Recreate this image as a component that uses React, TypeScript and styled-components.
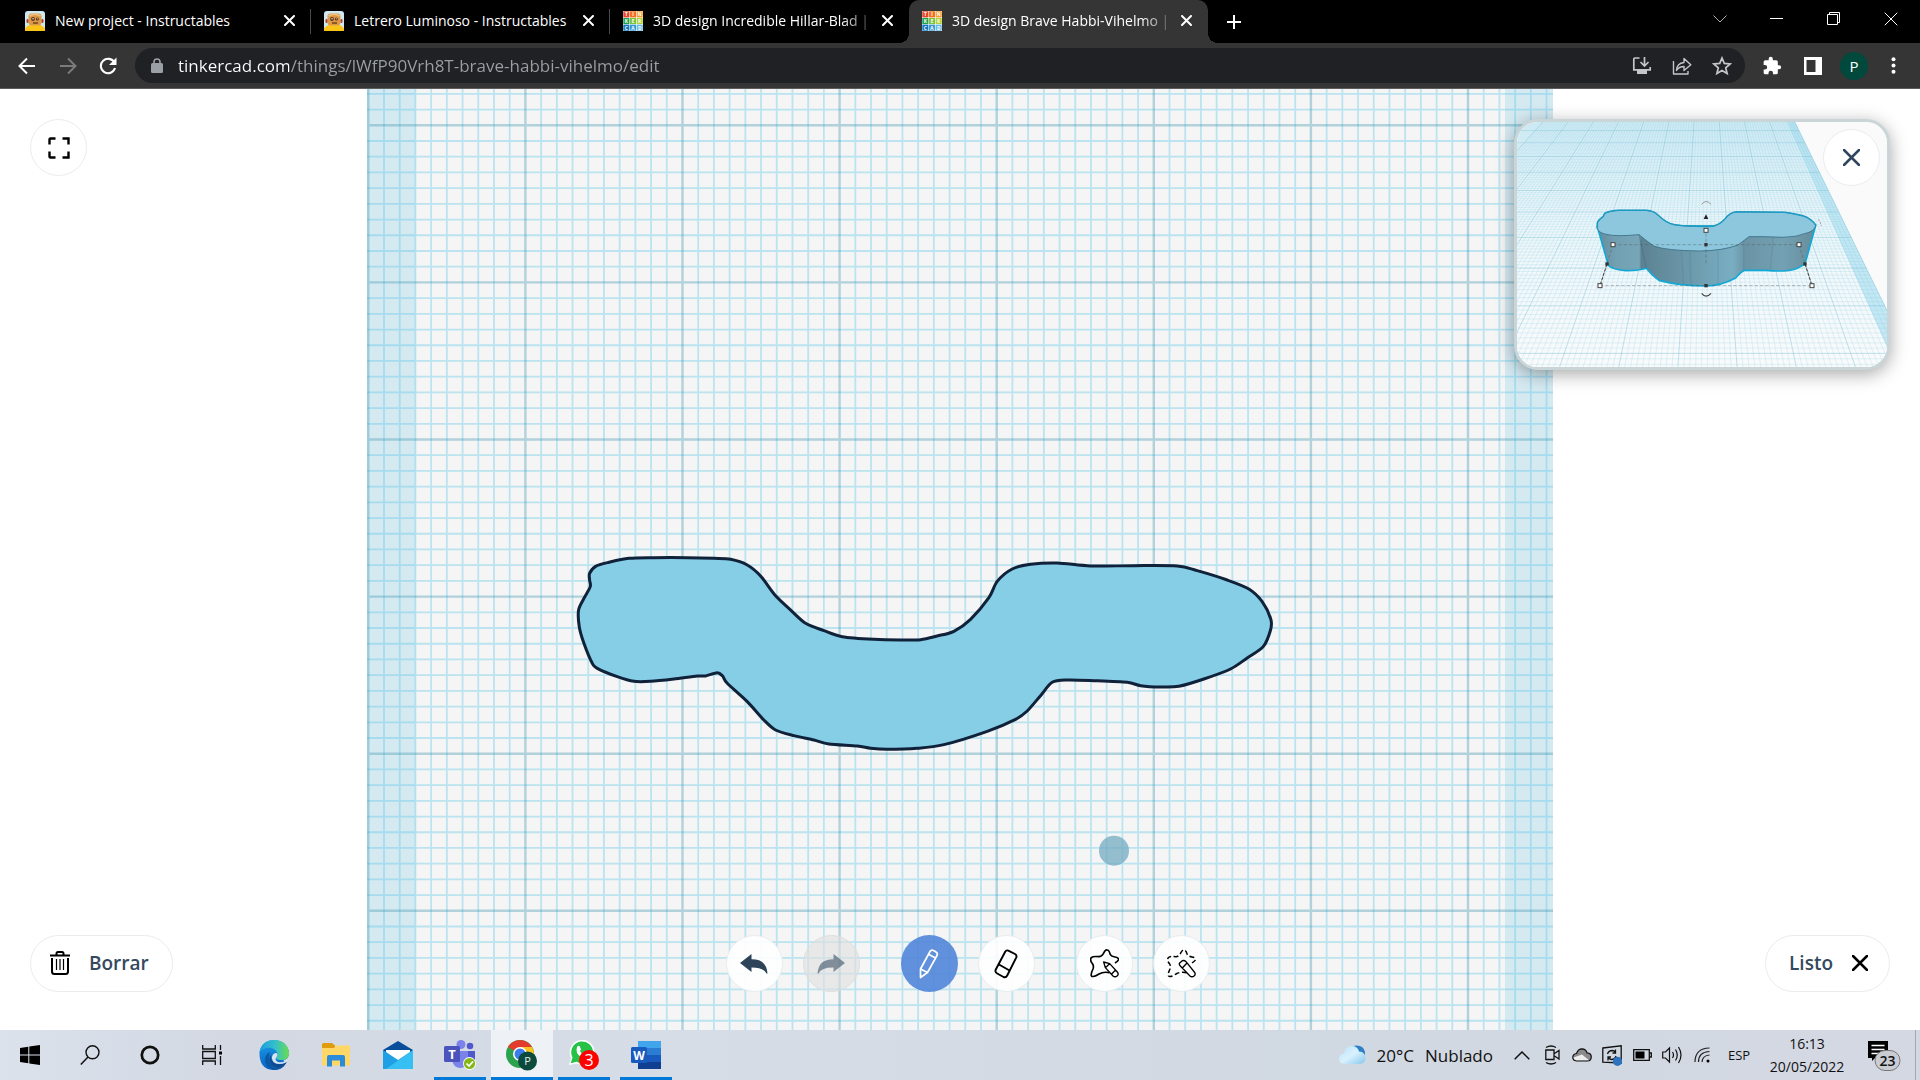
import React from "react";
import styled, { createGlobalStyle, css } from "styled-components";

const UI_FONT = `"Open Sans", "Noto Sans", sans-serif`;

const GlobalStyle = createGlobalStyle`
  *, *::before, *::after { box-sizing: border-box; }
  body { margin: 0; background: #fff; font-family: ${UI_FONT}; }
  button, input { font: inherit; color: inherit; margin: 0; }
  button { border: 0; padding: 0; background: none; cursor: pointer; }
  svg { display: block; flex: none; }
`;

const Page = styled.div`
  display: flex;
  flex-direction: column;
  min-height: 100vh;
`;

/* ---------- browser chrome ---------- */

const TabStrip = styled.header`
  display: flex;
  align-items: stretch;
  justify-content: space-between;
  height: 43px;
  background: #000;
  color: #fff;
  padding-left: 12px;
`;

const Tabs = styled.div`
  display: flex;
  align-items: stretch;
`;

const Tab = styled.div<{ $active?: boolean; $divider?: boolean }>`
  position: relative;
  display: flex;
  align-items: center;
  gap: 10px;
  width: 299px;
  padding: 0 12px 2px 13px;
  ${(p) => p.$divider && css`
    &::after { content: ""; position: absolute; right: 0; top: 9px; height: 25px; width: 1px; background: #4a4a4a; }`}
  ${(p) => p.$active && css`
    background: #353535;
    border-radius: 10px 10px 0 0;
    &::before, &::after {
      content: ""; position: absolute; bottom: 0; width: 10px; height: 10px;
    }
    &::before { left: -10px; background: radial-gradient(circle at 0 0, #000 10px, #353535 10px); }
    &::after { right: -10px; background: radial-gradient(circle at 100% 0, #000 10px, #353535 10px); }
  `}
`;

const TabTitle = styled.button<{ $fade?: boolean }>`
  flex: 1;
  min-width: 0;
  white-space: nowrap;
  text-align: left;
  font-size: 14px;
  line-height: 20px;
  ${(p) => p.$fade && css`mask-image: linear-gradient(90deg, #000 88%, rgba(0, 0, 0, 0.3));`}
`;

const IconButton = styled.button<{ $w?: number }>`
  display: flex;
  align-items: center;
  justify-content: center;
  width: ${(p) => p.$w ?? 20}px;
  flex: none;
`;

const WindowControls = styled.div`
  display: flex;
  align-items: center;
  padding: 0 1px 6px 0;
`;

const Toolbar = styled.div`
  display: flex;
  align-items: center;
  height: 46px;
  background: #353535;
  border-bottom: 1px solid #5c5c5c;
  padding: 0 15px 0 7px;
  color: #fff;
`;

const NavButtons = styled.div`
  display: flex;
  width: 128px;
`;

const Omnibox = styled.div`
  display: flex;
  align-items: center;
  flex: 1;
  height: 35px;
  border-radius: 18px;
  background: #202124;
  padding: 0 3px 0 16px;
  gap: 15px;
`;

const UrlInput = styled.input`
  flex: 1;
  min-width: 0;
  border: 0;
  outline: 0;
  padding: 0;
  font-size: 17px;
  line-height: 26px;
  color: transparent;
  background: linear-gradient(90deg, #fff 111px, #9aa0a6 111px);
  -webkit-background-clip: text;
  background-clip: text;
`;

const OmniActions = styled.div`
  display: flex;
`;

const Avatar = styled.button`
  width: 28px;
  height: 28px;
  border-radius: 50%;
  background: #00493c;
  font-size: 15px;
  line-height: 28px;
`;

/* ---------- editor ---------- */

const Stage = styled.main`
  position: relative;
  flex: 1;
  display: flex;
  justify-content: center;
  overflow: hidden;
  background: #fff;
  color: #34495e;
`;

const Corner = styled.div<{ $v: "top" | "bottom"; $h: "left" | "right" }>`
  position: absolute;
  ${(p) => p.$v}: ${(p) => (p.$v === "top" ? 30 : 38)}px;
  ${(p) => p.$h}: 30px;
`;

const round = css`
  display: flex;
  align-items: center;
  justify-content: center;
  border: 1px solid #e9ecee;
  background: rgba(255, 255, 255, 0.9);
`;

const RoundButton = styled.button<{ $active?: boolean; $muted?: boolean }>`
  ${round}
  width: 57px;
  height: 57px;
  border-radius: 50%;
  ${(p) => p.$active && css`background: rgba(84, 136, 217, 0.92); border-color: transparent;`}
  ${(p) => p.$muted && css`background: rgba(225, 225, 225, 0.65); border-color: #dedede;`}
`;

const PillButton = styled.button<{ $iconLast?: boolean }>`
  ${round}
  height: 57px;
  border-radius: 29px;
  padding: ${(p) => (p.$iconLast ? "0 21px 2px 23px" : "0 23px 2px 19px")};
  gap: 19px;
  font-size: 19px;
  line-height: 28px;
  font-weight: 600;
`;

const Tools = styled.div`
  position: absolute;
  left: 0;
  right: 0;
  bottom: 38px;
  display: flex;
  justify-content: center;
  gap: 41px;
  padding-left: 15px;
  pointer-events: none;
`;

const ToolGroup = styled.div`
  display: flex;
  gap: 20px;
  pointer-events: auto;
`;

const Preview = styled.section`
  position: relative;
  border: 3px solid #cad5d8;
  border-radius: 24px;
  background: #fafafa;
  box-shadow: 0 4px 18px rgba(0, 0, 0, 0.35);
  overflow: hidden;
`;

const PreviewClose = styled.div`
  position: absolute;
  top: 7px;
  right: 7px;
`;

/* ---------- taskbar ---------- */

const Taskbar = styled.footer`
  display: flex;
  justify-content: space-between;
  height: 50px;
  background: linear-gradient(90deg, #dbe2ec 0%, #d3d8e3 12%, #d6dde7 35%, #d0d8e1 70%, #d4d8e3 100%);
  color: #111;
`;

const TaskGroup = styled.div`
  display: flex;
  align-items: stretch;
`;

const TaskButton = styled.button<{ $running?: boolean; $current?: boolean; $w?: number }>`
  position: relative;
  display: flex;
  align-items: center;
  justify-content: center;
  width: ${(p) => p.$w ?? 62}px;
  ${(p) => p.$current && css`background: #eef1f6;`}
  ${(p) => p.$running && css`&::after {
    content: ""; position: absolute; bottom: 0; height: 3px; background: #0078d7;
    left: ${p.$current ? 0 : 5}px; right: ${p.$current ? 0 : 5}px;
  }`}
`;

const TrayButton = styled.button`
  display: flex;
  align-items: center;
  justify-content: center;
  width: 30px;
`;

const Weather = styled.button`
  display: flex;
  align-items: center;
  gap: 11px;
  font-size: 17px;
  margin-right: 14px;
`;

const Language = styled.button`
  width: 44px;
  font-size: 13px;
`;

const Clock = styled.button`
  width: 92px;
  font-size: 14px;
  line-height: 23px;
  text-align: center;
`;

const Notifications = styled.button`
  display: flex;
  align-items: center;
  justify-content: center;
  width: 63px;
  border-right: 1px solid #a2a7b1;
  margin-right: 4px;
`;

/* ---------- drawings ---------- */

type Pt = [number, number];

/** Closed Catmull-Rom curve through the given points. */
const smooth = (pts: Pt[]) => {
  const n = pts.length;
  let d = `M${pts[0][0]} ${pts[0][1]}`;
  for (let i = 0; i < n; i++) {
    const [a, b, c, e] = [pts[(i - 1 + n) % n], pts[i], pts[(i + 1) % n], pts[(i + 2) % n]];
    d += `C${b[0] + (c[0] - a[0]) / 7} ${b[1] + (c[1] - a[1]) / 7} ${c[0] - (e[0] - b[0]) / 7} ${c[1] - (e[1] - b[1]) / 7} ${c[0]} ${c[1]}`;
  }
  return d + "Z";
};

const SCRIBBLE: Pt[] = [
  [147, 130], [165, 109], [205, 97], [265, 85], [340, 83], [440, 83], [520, 85], [570, 88], [620, 105], [660, 138],
  [703, 195], [748, 238], [795, 280], [850, 302], [905, 320], [1000, 328], [1080, 330], [1140, 329], [1190, 318],
  [1240, 304], [1290, 268], [1345, 203], [1370, 154], [1415, 117], [1470, 103], [1550, 99], [1650, 108], [1780, 107],
  [1910, 108], [1970, 122], [2060, 150], [2125, 177], [2165, 215], [2191, 268], [2190, 300], [2168, 350], [2120, 384],
  [2070, 417], [1990, 447], [1915, 469], [1860, 471], [1800, 467], [1760, 457], [1660, 452], [1580, 450], [1535, 457],
  [1500, 497], [1460, 543], [1425, 568], [1340, 604], [1210, 644], [1130, 655], [1040, 658], [990, 655], [950, 648],
  [865, 642], [820, 630], [760, 617], [705, 600], [670, 570], [620, 515], [560, 460], [546, 438], [530, 428], [495, 438],
  [470, 438], [400, 447], [330, 454], [280, 454], [230, 440], [170, 415], [155, 400], [130, 340], [116, 290], [114, 240],
  [130, 205], [149, 170], [147, 150],
];

/** Ruled lines of the plane, drawn across and down at a fixed step. */
const ruling = (step: number, skip?: number) => {
  let d = "";
  for (let i = 0; i * step < 1186; i++) if (!skip || i % skip) d += `M${0.3 + i * step} 0V941`;
  for (let i = -10; 36.3 + i * step < 941; i++) {
    if (36.3 + i * step > 0 && (!skip || i % skip)) d += `M-1 ${36.3 + i * step}H1185`;
  }
  return d;
};

const Workplane = () => (
  <svg width="1186" height="941" viewBox="-1 0 1186 941" role="img" aria-label="Plano de trabajo">
    <rect x="-1" width="1186" height="941" fill="#f5f5f5" />
    <rect x="-1" width="48.500" height="941" fill="#d5e9f1" />
    <rect x="1137" width="48" height="941" fill="#d5e9f1" />
    <path d={ruling(15.71, 10)} stroke="#55c4e8" strokeOpacity=".36" strokeWidth="1.800" fill="none" />
    <path d={ruling(157.1)} stroke="#3a95b0" strokeOpacity=".36" strokeWidth="2.400" fill="none" />
    <g transform="translate(172.6 441) scale(.3333)">
      <path d={smooth(SCRIBBLE)} fill="#86cde6" stroke="#10213a" strokeWidth="9" strokeLinejoin="round" />
    </g>
    <circle cx="746" cy="761.700" r="15" fill="#6fa9bf" fillOpacity=".72" />
  </svg>
);

const lineX = (k: number, y: number) => 583 + 76 * k + ((-48 + 101 * k) * (y - 369)) / 728;

const planeLines = () => {
  let minor = "";
  let major = "";
  for (let i = -60; i <= 40; i++) {
    const seg = `M${lineX(i / 10, 360)} 360L${lineX(i / 10, 1105)} 1105`;
    if (i % 10 === 0) major += seg;
    else minor += seg;
  }
  for (let i = -13; i <= 92; i++) {
    const y = 1 / (0.000912 + i * 0.0000105) - 179;
    if (y < 360 || y > 1110) continue;
    const seg = `M40 ${y}H${Math.min(1170, lineX(4, y))}`;
    if (i % 10 === 0) major += seg;
    else minor += seg;
  }
  return { minor, major };
};

const PLANE = planeLines();

const Handle = ({ x, y }: { x: number; y: number }) => (
  <rect x={x - 6} y={y - 6} width="12" height="12" fill="#fff" stroke="#444" strokeWidth="3" />
);
const Dot = ({ x, y }: { x: number; y: number }) => <rect x={x - 5} y={y - 5} width="10" height="10" fill="#333" />;

const TOP_FACE =
  "M315 640Q330 632 360 631H440Q462 632 475 645Q500 670 525 674Q560 680 640 679Q660 674 675 658Q690 636 712 635L855 637Q905 644 922 652Q945 666 948 676Q945 692 925 698Q890 712 850 712Q790 709 748 710Q735 720 715 735Q670 752 600 753Q500 752 462 738Q440 722 418 704Q350 710 325 704Q298 700 293 686V668Q296 660 310 650Z";

const Preview3D = () => (
  <svg width="370" height="245" viewBox="52 366 1110 735" role="img" aria-label="Vista previa 3D">
    <defs>
      <linearGradient id="haze" x1="0" y1="0" x2="0" y2="1">
        <stop offset="0" stopColor="#dff1f8" />
        <stop offset=".45" stopColor="#eef7fa" />
        <stop offset="1" stopColor="#f9fafb" />
      </linearGradient>
      <linearGradient id="side" x1="295" x2="945" y1="0" y2="0" gradientUnits="userSpaceOnUse">
        <stop offset="0" stopColor="#658b9b" /><stop offset=".08" stopColor="#72a0b2" />
        <stop offset=".19" stopColor="#76a6b8" /><stop offset=".2" stopColor="#5c8292" />
        <stop offset=".4" stopColor="#6a97a9" /><stop offset=".62" stopColor="#79aec2" />
        <stop offset=".68" stopColor="#6a94a5" /><stop offset=".85" stopColor="#73a1b3" />
        <stop offset="1" stopColor="#668d9c" />
      </linearGradient>
    </defs>
    <rect x="52" y="366" width="1110" height="735" fill="#fafafa" />
    <path d={`M40 360H${lineX(4, 360)}L${lineX(4, 1105)} 1105H40Z`} fill="url(#haze)" />
    <path d={`M${lineX(3.68, 360)} 360H${lineX(4, 360)}L${lineX(4, 1105)} 1105H${lineX(3.68, 1105)}Z`} fill="#c3e7f3" />
    <path d={PLANE.minor} stroke="#7fcbe4" strokeOpacity=".32" strokeWidth="2" fill="none" />
    <path d={PLANE.major} stroke="#5aaecb" strokeOpacity=".42" strokeWidth="2.500" fill="none" />
    <path
      d="M293 680L325 792Q330 808 380 812Q420 812 440 805Q460 830 480 842Q540 858 620 858Q665 857 708 834Q725 815 735 811H800Q860 817 890 806Q915 795 918 785L948 676Z"
      fill="url(#side)" stroke="#12a9d6" strokeWidth="5" />
    <path d={TOP_FACE} fill="#8dc7dd" stroke="#3a6c82" strokeWidth="2.500" />
    <path
      d="M948 676Q945 666 922 652Q905 644 855 637L712 635Q690 636 675 658Q660 674 640 679Q560 680 525 674Q500 670 475 645Q462 632 440 631H360Q330 632 315 640L310 650Q296 660 293 668V686"
      fill="none" stroke="#1c9cc4" strokeWidth="4.500" />
    <path d="M418 704L440 805" stroke="#3a5f70" strokeWidth="2" strokeOpacity=".6" />
    <path d="M732 722V811M570 755L574 855M545 755L552 853M655 752V852M820 712L812 811" stroke="#3a5f70" strokeWidth="4" strokeOpacity=".14" />
    <path d="M340 734H898M301 857H937M619 700V790M340 734L301 857M898 734L937 857" stroke="#555" strokeOpacity=".55" strokeWidth="2.200" strokeDasharray="10 6" fill="none" />
    <path d="M322 792L301 857M916 792L937 857" stroke="#333" strokeWidth="3" strokeDasharray="9 5" />
    <Handle x={619} y={691} /><Handle x={340} y={734} /><Handle x={898} y={734} />
    <Handle x={301} y={857} /><Handle x={937} y={857} />
    <Dot x={619} y={734} /><Dot x={322} y={792} /><Dot x={916} y={792} /><Dot x={619} y={857} />
    <path d="M619 643L626 657H612Z" fill="#222" />
    <path d="M606 613Q619 596 634 613" fill="none" stroke="#999" strokeWidth="3" />
    <path d="M606 880Q619 897 634 880" fill="none" stroke="#444" strokeWidth="3.500" />
    <path d="M955 658Q963 664 964 678" fill="none" stroke="#999" strokeWidth="3" strokeDasharray="6 4" />
  </svg>
);

const Cross = ({ size, color = "currentColor", weight = 2 }: { size: number; color?: string; weight?: number }) => (
  <svg width={size} height={size} viewBox={`0 0 ${size} ${size}`}>
    <path d={`M1 1L${size - 1} ${size - 1}M${size - 1} 1L1 ${size - 1}`} stroke={color} strokeWidth={weight} strokeLinecap="round" />
  </svg>
);

const RobotIcon = () => (
  <svg width="20" height="20" viewBox="0 0 20 20">
    <rect width="20" height="20" rx="3" fill="#cfe9f3" />
    <path d="M0 20V18Q2 14 6 14H14Q18 14 20 18V20Z" fill="#fcc419" />
    <rect x="3.500" y="2.500" width="13" height="12" rx="3" fill="#dc9a45" />
    <path d="M4.500 5Q10 1.500 15.500 5" stroke="#f0c080" strokeWidth="1.500" fill="none" />
    <rect x="1.500" y="8" width="2" height="4" rx="1" fill="#b33d2e" /><rect x="16.500" y="8" width="2" height="4" rx="1" fill="#b33d2e" />
    <circle cx="8" cy="8" r="1.900" fill="#5b2e1c" /><circle cx="12.400" cy="8" r="1.500" fill="#5b2e1c" />
    <circle cx="8" cy="7.700" r=".7" fill="#fff" /><circle cx="12.400" cy="7.800" r=".5" fill="#fff" />
    <path d="M8 12H13" stroke="#5b2e1c" strokeWidth="1.200" />
  </svg>
);

const TINKER: [string, string][] = [
  ["T", "#e8452c"], ["I", "#f2711f"], ["N", "#f79a2b"],
  ["K", "#1fa04f"], ["E", "#7cc142"], ["R", "#b0d136"],
  ["C", "#1477bd"], ["A", "#3a9ad5"], ["D", "#66b8e6"],
];

const TinkercadIcon = () => (
  <svg width="20" height="20" viewBox="0 0 21 21">
    <rect width="21" height="21" fill="#fff" />
    {TINKER.map(([letter, color], i) => (
      <g key={letter} transform={`translate(${(i % 3) * 7} ${Math.floor(i / 3) * 7})`}>
        <rect x=".3" y=".3" width="6.400" height="6.400" fill={color} />
        <text x="3.500" y="5.500" textAnchor="middle" fontSize="5" fontWeight="700" fill="#fff">{letter}</text>
      </g>
    ))}
  </svg>
);

const stroke = { fill: "none", stroke: "currentColor" } as const;

const BackIcon = () => (
  <svg width="18" height="18" viewBox="0 0 18 18"><path d="M17 9H2M9 1.500L1.500 9L9 16.500" {...stroke} strokeWidth="2" /></svg>
);
const ForwardIcon = () => (
  <svg width="18" height="18" viewBox="0 0 18 18"><path d="M1 9H16M9 1.500L16.500 9L9 16.500" fill="none" stroke="#7b7b7b" strokeWidth="2" /></svg>
);
const ReloadIcon = () => (
  <svg width="18" height="18" viewBox="0 0 18 18">
    <path d="M15.400 5.500A7.200 7.200 0 1 0 16 11" {...stroke} strokeWidth="2.100" /><path d="M17.500 .5V8H10Z" fill="currentColor" />
  </svg>
);
const LockIcon = () => (
  <svg width="12" height="15" viewBox="0 0 12 15">
    <rect y="5" width="12" height="10" rx="1.500" fill="#9aa0a6" /><path d="M3 6V4A3 3 0 0 1 9 4V6" stroke="#9aa0a6" strokeWidth="1.600" fill="none" />
  </svg>
);
const InstallIcon = () => (
  <svg width="20" height="20" viewBox="0 0 20 20">
    <path d="M7.500 2H3Q1.800 2 1.800 3.200V13.800H18.200V11M12.500 1V9.500M8.500 6L12.500 10L16.500 6" fill="none" stroke="#c4c7ca" strokeWidth="1.700" />
    <path d="M5 14H15V18H5Z" fill="#c4c7ca" />
  </svg>
);
const ShareIcon = () => (
  <svg width="20" height="20" viewBox="0 0 20 20">
    <path d="M1.500 5V18H16V15M4.500 14.500Q5 7 12 6.500V2.500L18.800 8.700L12 14.500V10.500Q7 10.500 4.500 14.500Z" fill="none" stroke="#c4c7ca" strokeWidth="1.400" strokeLinejoin="round" />
  </svg>
);
const StarIcon = () => (
  <svg width="20" height="20" viewBox="0 0 20 20">
    <path d="M10 2L12.300 7.400L18.200 7.900L13.700 11.800L15.100 17.500L10 14.400L4.900 17.500L6.300 11.800L1.800 7.900L7.700 7.400Z" fill="none" stroke="#c4c7ca" strokeWidth="1.700" />
  </svg>
);
const PuzzleIcon = () => (
  <svg width="20" height="20" viewBox="0 0 24 24">
    <path fill="#fff" d="M20.500 11H19V7a2 2 0 0 0-2-2h-4V3.500a2.500 2.500 0 0 0-5 0V5H4a2 2 0 0 0-2 2v3.800h1.500a2.700 2.700 0 0 1 0 5.400H2V20a2 2 0 0 0 2 2h3.800v-1.500a2.700 2.700 0 0 1 5.400 0V22H17a2 2 0 0 0 2-2v-4h1.500a2.500 2.500 0 0 0 0-5Z" />
  </svg>
);
const PanelIcon = () => (
  <svg width="18" height="18" viewBox="0 0 18 18"><path fill="#fff" fillRule="evenodd" d="M0 0H18V18H0ZM2.500 3V15H11.500V3Z" /></svg>
);
const DotsIcon = () => (
  <svg width="5" height="17" viewBox="0 0 5 17"><g fill="#fff"><circle cx="2.500" cy="2.200" r="2" /><circle cx="2.500" cy="8.500" r="2" /><circle cx="2.500" cy="14.800" r="2" /></g></svg>
);

const UndoIcon = ({ flip }: { flip?: boolean }) => (
  <svg width="28" height="20" viewBox="0 0 28 20">
    <path transform={flip ? "translate(28 0) scale(-1 1)" : undefined} opacity={flip ? 0.55 : 1} fill="#2c435a"
      d="M0 9L11.500 0V5.200Q26.500 5 27.500 19.500H26.500Q23.500 13.500 11.500 13.600V18Z" />
  </svg>
);
const PencilIcon = () => (
  <svg width="20" height="30" viewBox="0 0 20 30">
    <path d="M1.500 20L11 2.500Q12.200 .5 14.500 1.500L17 3Q19 4.200 18 6.500L8.500 23.500L1.500 28.500ZM1.500 20L8.500 23.500M9.500 5.200L16.500 9" fill="none" stroke="#fff" strokeWidth="1.700" strokeLinejoin="round" />
  </svg>
);
const EraserIcon = () => (
  <svg width="24" height="30" viewBox="0 0 24 30">
    <path d="M1.800 20.500L11.200 2.800Q12.300 .8 14.300 1.600L21 5Q23.200 6.200 22.200 8.600L13.200 26.500Q12 29 9.500 28L3.200 24.500Q.6 23 1.800 20.500ZM5 15.500L15.500 21.500" fill="none" stroke="#000" strokeWidth="1.900" />
  </svg>
);
const STAR_OUTLINE =
  "M116 157Q97 153 84 161Q66 173 61 166Q59 160 66 146Q69 138 65 131Q55 119 61 112Q66 107 84 109Q92 109 97 100Q103 87 109 89Q114 89 118 103Q121 108 132 110Q144 112 142 119Q140 123 132 128";
const ShapeDrawIcon = () => (
  <svg width="29" height="29" viewBox="57 86 87 87">
    <path d={STAR_OUTLINE} fill="none" stroke="#000" strokeWidth="5" strokeLinejoin="round" />
    <path d="M98 125L116 130L139 155Q144 161 139 166Q132 172 126 167L103 142ZM116 130L103 142M133 150L121 162" fill="#fff" stroke="#000" strokeWidth="4" strokeLinejoin="round" />
  </svg>
);
const ShapeEraseIcon = () => (
  <svg width="29" height="29" viewBox="57 86 87 87">
    <path d={STAR_OUTLINE} fill="none" stroke="#000" strokeWidth="4.500" strokeDasharray="14 8" />
    <path d="M95 128L103 121Q109 119 114 124L139 155Q144 161 139 166Q132 172 126 167L97 137Q92 132 95 128ZM117 128L103 143" fill="#fff" stroke="#000" strokeWidth="4" strokeLinejoin="round" />
  </svg>
);
const ExpandIcon = () => (
  <svg width="22" height="22" viewBox="0 0 22 22">
    <path d="M1.500 7.500V2.500Q1.500 1.500 2.500 1.500H7.500M14.500 1.500H20.500V7.500M20.500 14.500V20.500H14.500M7.500 20.500H2.500Q1.500 20.500 1.500 19.500V14.500" fill="none" stroke="#000" strokeWidth="2.400" />
  </svg>
);
const TrashIcon = () => (
  <svg width="20" height="24" viewBox="0 0 20 24">
    <path d="M0 4.500H20M6.500 4V2.500Q6.500 1 8 1H12Q13.500 1 13.500 2.500V4" fill="none" stroke="#000" strokeWidth="2" />
    <path d="M2 7V20.500Q2 23 4.500 23H15.500Q18 23 18 20.500V7" fill="none" stroke="#000" strokeWidth="2" />
    <path d="M6.500 8V19M10 8V19M13.500 8V19" stroke="#000" strokeWidth="1.200" />
  </svg>
);

const WindowsIcon = () => (
  <svg width="20" height="20" viewBox="0 0 20 20"><path d="M0 3L8.300 1.800V9.500H0ZM9.300 1.600L20 0V9.500H9.300ZM0 10.500H8.300V18.300L0 17.100ZM9.300 10.500H20V20L9.300 18.500Z" /></svg>
);
const SearchIcon = () => (
  <svg width="20" height="20" viewBox="0 0 20 20"><circle cx="12.500" cy="7.300" r="6.500" fill="none" stroke="#111" strokeWidth="1.400" /><path d="M8 12L.8 19.500" stroke="#111" strokeWidth="1.500" /></svg>
);
const CortanaIcon = () => (
  <svg width="20" height="20" viewBox="0 0 20 20"><circle cx="10" cy="10" r="8.200" fill="none" stroke="#111" strokeWidth="2.700" /></svg>
);
const TaskViewIcon = () => (
  <svg width="20" height="20" viewBox="0 0 20 20">
    <path d="M.7 0V4H13.300V0M.7 20V16H13.300V20M.7 6.500H13.300V13.500H.7ZM18.500 0V5M18.500 11V20" fill="none" stroke="#111" strokeWidth="1.300" /><rect x="17" y="6.500" width="3" height="3" />
  </svg>
);
const EdgeIcon = () => (
  <svg width="30" height="30" viewBox="0 0 30 30">
    <defs>
      <linearGradient id="eg" x1="0" x2="1"><stop offset="0" stopColor="#1d9ce0" /><stop offset=".55" stopColor="#35c1c8" /><stop offset="1" stopColor="#6bdc4c" /></linearGradient>
      <linearGradient id="eb" x1="0" x2="0" y1="0" y2="1"><stop offset="0" stopColor="#1a9ee5" /><stop offset="1" stopColor="#0a62c4" /></linearGradient>
    </defs>
    <path d="M.5 12Q3 0 15.500 0Q27.500 .5 30 12Q30.500 19 24 20L27.500 22.500Q23 30 14 30Q0 29 .5 12Z" fill="url(#eb)" />
    <path d="M.5 12Q3 0 15.500 0Q27.500 .5 30 12Q30.500 19 24 20Q17.500 20.500 17 18Q19.500 15.500 18 12Q14 6.500 7 8Q2.500 9.500 .5 12Z" fill="url(#eg)" />
    <path d="M11 12Q8 20 13.500 25Q18 29 25.500 25.500Q21.500 30.500 14 30Q6 27.500 6 19Q6.500 14 11 12Z" fill="#0c58a5" />
    <path d="M12.500 14Q10.500 19 15 22.500Q20 26 26.500 22Q28 21 27.500 22.500Q26 25 24.500 26.200Q17 29 12.500 24Q8.500 18 12.500 14Z" fill="#104a8e" />
    <path d="M17 18Q15.500 20 19 22Q24 23 28.500 19.500Q29 21 27 22.500Q20 25.500 15 22.500Q11.500 18.500 14 14.500Q17.500 12 18.500 14Q18.500 16.500 17 18Z" fill="#d7e4ef" />
  </svg>
);
const ExplorerIcon = () => (
  <svg width="28" height="24" viewBox="0 0 28 24">
    <path d="M0 1.500Q0 0 1.500 0H10L13 2.500V6H0Z" fill="#e09c0a" /><path d="M0 5H12L14 2.500H28V22.500H0Z" fill="#ffd766" />
    <path d="M5 23.500V14Q5 12 7 12H21Q23 12 23 14V23.500H18V17.500H10V23.500Z" fill="#2a8bd8" />
  </svg>
);
const MailIcon = () => (
  <svg width="30" height="28" viewBox="0 0 30 28">
    <path d="M0 9L15 0L30 9V14H0Z" fill="#0a4d9b" /><path d="M3 9H27V17L15 22L3 17Z" fill="#fff" />
    <path d="M0 9V28H30V9L15 19Z" fill="#1f9fe4" /><path d="M30 9L3 28H30Z" fill="#35bff2" />
  </svg>
);
const TeamsIcon = () => (
  <svg width="32" height="30" viewBox="0 0 32 30">
    <circle cx="17" cy="4.500" r="4.500" fill="#7b83eb" /><circle cx="26" cy="6" r="3.300" fill="#5059c9" />
    <path d="M21 11H31V19Q30 24 25 24Z" fill="#5059c9" /><path d="M9 11H24V20Q23 28 16 28Q9 27 8 20Z" fill="#7b83eb" />
    <rect y="6" width="16" height="16" rx="1.500" fill="#4b53bc" />
    <text x="8" y="18.500" textAnchor="middle" fontSize="13" fontWeight="700" fill="#fff">T</text>
    <circle cx="25.500" cy="23.500" r="6.500" fill="#fff" /><circle cx="25.500" cy="23.500" r="5.600" fill="#85b817" />
    <path d="M22.500 23.500L25 26L29 21.500" stroke="#fff" strokeWidth="1.700" fill="none" />
  </svg>
);
const ChromeIcon = () => (
  <svg width="32" height="31" viewBox="0 0 32 31">
    <circle cx="14" cy="14" r="14" fill="#2ba24c" />
    <path d="M14 14L1.900 7A14 14 0 0 1 26.100 7Z" fill="#e33b2e" /><path d="M14 7H26.100A14 14 0 0 1 14 28L20 17Z" fill="#fcc31e" />
    <circle cx="14" cy="14" r="7" fill="#fff" /><circle cx="14" cy="14" r="5.500" fill="#3b7ded" />
    <circle cx="21.500" cy="21" r="9.500" fill="#0b4a3c" />
    <text x="21.500" y="25" textAnchor="middle" fontSize="11" fill="#e6f2ee">P</text>
  </svg>
);
const WhatsAppIcon = () => (
  <svg width="30" height="30" viewBox="0 0 30 30">
    <path d="M0 25L2 18A12.500 12.500 0 1 1 7.500 23.500Z" fill="#fff" /><path d="M1.700 23.300L3.500 17.500A10.900 10.900 0 1 1 7.500 21.700Z" fill="#25c247" />
    <path d="M8 7Q10 4.500 11 7L12 9.500Q11 11 11 11Q12.500 14 15 15L17 14L19 16Q17 20 12 17Q6 13 8 7Z" fill="#fff" />
    <circle cx="20" cy="20" r="10" fill="#f00" />
    <text x="20" y="25.500" textAnchor="middle" fontSize="16" fill="#fff">3</text>
  </svg>
);
const WordIcon = () => (
  <svg width="30" height="28" viewBox="0 0 30 28">
    <path d="M7 0H30V7H7Z" fill="#41a5ee" /><path d="M7 7H30V14H7Z" fill="#2b7cd3" /><path d="M7 14H30V21H7Z" fill="#185abd" /><path d="M7 21H30V28H7Z" fill="#103f91" />
    <rect y="6" width="16" height="16" rx="1.500" fill="#185abd" />
    <text x="8" y="18.500" textAnchor="middle" fontSize="12" fontWeight="700" fill="#fff">W</text>
  </svg>
);

const WeatherIcon = () => (
  <svg width="27" height="20" viewBox="0 0 27 20">
    <defs><linearGradient id="wc" x1="0" y1="0" x2="1" y2="1"><stop offset="0" stopColor="#b9e2fa" /><stop offset=".5" stopColor="#d9f1fd" /><stop offset="1" stopColor="#85c6ee" /></linearGradient></defs>
    <path d="M14 1Q24-1 26 7V12H16Z" fill="#2f80c8" />
    <path d="M6 19Q0 18.500 0 13.500Q.5 9 5 8.500Q6 1 13 1Q18.500 1 20 6.500Q26.500 7 26.500 13Q26 19 20 19Z" fill="url(#wc)" />
  </svg>
);
const ChevronUp = () => <svg width="16" height="9" viewBox="0 0 16 9"><path d="M.7 8.300L8 1L15.300 8.300" fill="none" stroke="#111" strokeWidth="1.500" /></svg>;
const MeetIcon = () => (
  <svg width="15" height="20" viewBox="0 0 15 20"><path d="M.8 5H9V14.500H.8ZM9.500 8.500L14 5.500V14L9.500 11M1 2.500Q6-.5 11 2.500M1 17.500Q6 20.500 11 17.500" fill="none" stroke="#111" strokeWidth="1.300" /></svg>
);
const CloudIcon = () => (
  <svg width="20" height="14" viewBox="0 0 20 14">
    <path d="M4.500 13Q.7 12.500 .8 9Q1 6 4.500 5.500Q6 .8 10 .8Q14 1 15 4.800Q19.300 5 19.300 9Q19 13 15.500 13Z" fill="#8b8b8b" stroke="#111" strokeWidth="1.200" />
    <path d="M4 12.300Q1.500 11.500 1.500 9.500L10 6.500L17 12.300Z" fill="#eee" />
  </svg>
);
const SyncIcon = () => (
  <svg width="20" height="21" viewBox="0 0 20 21">
    <path d="M.8 3L19.200.8V18L.8 17.200ZM5.500 9Q6.500 5.500 10.500 5.500Q12.500 5.700 13.500 7.500M13.500 4.500V8H10.500M14 11Q13 14.500 9.500 14.500Q7.500 14.300 6 12.500M6 15.500V12H9" fill="none" stroke="#111" strokeWidth="1.300" />
    <circle cx="15.500" cy="16.300" r="4.600" fill="#2d72bd" />
  </svg>
);
const BatteryIcon = () => (
  <svg width="19" height="12" viewBox="0 0 19 12"><path d="M.7.700H16.300V11.300H.7ZM16.300 4H18.300V8H16.300" fill="none" stroke="#111" strokeWidth="1.300" /><rect x="2.500" y="2.500" width="9" height="7" /></svg>
);
const VolumeIcon = () => (
  <svg width="20" height="18" viewBox="0 0 20 18"><path d="M.7 6H3.500L7.500 2V16L3.500 12H.7ZM10.500 6Q12.500 9 10.500 12M13.500 3.500Q17 9 13.500 14.500M16.500 1Q21.500 9 16.500 17" fill="none" stroke="#111" strokeWidth="1.200" /></svg>
);
const WifiIcon = () => (
  <svg width="16" height="16" viewBox="0 0 16 16"><path d="M1 15Q1 1.500 15.500 1M4.500 15Q4.500 5 15.500 4.500M8 15Q8.500 8.500 15.500 8" fill="none" stroke="#222" strokeWidth="1.200" /><circle cx="14" cy="14" r="1.500" /></svg>
);
const NoticeIcon = () => (
  <svg width="34" height="34" viewBox="0 0 34 34">
    <path d="M1 3H21V20H8L5 23V20H1Z" /><path d="M4.500 7.500H17.500M4.500 11.500H17.500M4.500 15.500H12" stroke="#fff" strokeWidth="1.400" />
    <rect x="8" y="12.500" width="25" height="20" rx="10" fill="#c9ccd2" stroke="#777" />
    <text x="20.500" y="28" textAnchor="middle" fontSize="14" fontWeight="600" fill="#111">23</text>
  </svg>
);

const TABS = [
  { title: "New project - Instructables", icon: <RobotIcon />, divider: true },
  { title: "Letrero Luminoso - Instructables", icon: <RobotIcon />, divider: true },
  { title: "3D design Incredible Hillar-Blad |", icon: <TinkercadIcon />, fade: true },
  { title: "3D design Brave Habbi-Vihelmo |", icon: <TinkercadIcon />, fade: true, active: true },
];

export default function App() {
  return (
    <Page>
      <GlobalStyle />
      <TabStrip>
        <Tabs>
          {TABS.map((t) => (
            <Tab key={t.title} $active={t.active} $divider={t.divider}>
              {t.icon}
              <TabTitle $fade={t.fade}>{t.title}</TabTitle>
              <IconButton aria-label="Cerrar pestaña"><Cross size={11} /></IconButton>
            </Tab>
          ))}
          <IconButton $w={52} aria-label="Nueva pestaña">
            <svg width="14" height="14" viewBox="0 0 14 14"><path d="M7 0V14M0 7H14" stroke="#fff" strokeWidth="2" /></svg>
          </IconButton>
        </Tabs>
        <WindowControls>
          <IconButton $w={57} aria-label="Buscar pestañas"><svg width="14" height="8" viewBox="0 0 14 8"><path d="M.5.500L7 7L13.500.500" fill="none" stroke="#aaa" /></svg></IconButton>
          <IconButton $w={57} aria-label="Minimizar"><svg width="13" height="1" viewBox="0 0 13 1"><rect width="13" height="1" fill="#fff" /></svg></IconButton>
          <IconButton $w={57} aria-label="Restaurar"><svg width="13" height="13" viewBox="0 0 13 13"><path d="M.5 2.500H10.500V12.500H.5ZM2.500 2V.5H12.500V10.500H11" fill="none" stroke="#fff" /></svg></IconButton>
          <IconButton $w={57} aria-label="Cerrar"><Cross size={14} weight={1} /></IconButton>
        </WindowControls>
      </TabStrip>

      <Toolbar>
        <NavButtons>
          <IconButton $w={40} aria-label="Atrás"><BackIcon /></IconButton>
          <IconButton $w={41} aria-label="Adelante"><ForwardIcon /></IconButton>
          <IconButton $w={40} aria-label="Recargar"><ReloadIcon /></IconButton>
        </NavButtons>
        <Omnibox>
          <LockIcon />
          <UrlInput aria-label="Dirección" defaultValue="tinkercad.com/things/lWfP90Vrh8T-brave-habbi-vihelmo/edit" />
          <OmniActions>
            <IconButton $w={40} aria-label="Instalar"><InstallIcon /></IconButton>
            <IconButton $w={40} aria-label="Compartir"><ShareIcon /></IconButton>
            <IconButton $w={40} aria-label="Favorito"><StarIcon /></IconButton>
          </OmniActions>
        </Omnibox>
        <IconButton $w={54} aria-label="Extensiones"><PuzzleIcon /></IconButton>
        <IconButton $w={28} aria-label="Panel lateral"><PanelIcon /></IconButton>
        <IconButton as="span" $w={54}><Avatar aria-label="Perfil P">P</Avatar></IconButton>
        <IconButton $w={24} aria-label="Menú"><DotsIcon /></IconButton>
      </Toolbar>

      <Stage>
        <Workplane />
        <Corner $v="top" $h="left">
          <RoundButton aria-label="Encuadrar"><ExpandIcon /></RoundButton>
        </Corner>
        <Corner $v="top" $h="right">
          <Preview>
            <Preview3D />
            <PreviewClose><RoundButton aria-label="Cerrar vista previa"><Cross size={17} color="#2f4560" weight={2.5} /></RoundButton></PreviewClose>
          </Preview>
        </Corner>
        <Corner $v="bottom" $h="left">
          <PillButton><TrashIcon />Borrar</PillButton>
        </Corner>
        <Corner $v="bottom" $h="right">
          <PillButton $iconLast>Listo<Cross size={16} color="#000" weight={2.5} /></PillButton>
        </Corner>
        <Tools>
          <ToolGroup>
            <RoundButton aria-label="Deshacer"><UndoIcon /></RoundButton>
            <RoundButton $muted aria-label="Rehacer"><UndoIcon flip /></RoundButton>
          </ToolGroup>
          <ToolGroup>
            <RoundButton $active aria-label="Lápiz"><PencilIcon /></RoundButton>
            <RoundButton aria-label="Borrador"><EraserIcon /></RoundButton>
          </ToolGroup>
          <ToolGroup>
            <RoundButton aria-label="Dibujar forma"><ShapeDrawIcon /></RoundButton>
            <RoundButton aria-label="Borrar forma"><ShapeEraseIcon /></RoundButton>
          </ToolGroup>
        </Tools>
      </Stage>

      <Taskbar>
        <TaskGroup>
          <TaskButton $w={60} aria-label="Inicio"><WindowsIcon /></TaskButton>
          <TaskButton $w={60} aria-label="Buscar"><SearchIcon /></TaskButton>
          <TaskButton $w={60} aria-label="Cortana"><CortanaIcon /></TaskButton>
          <TaskButton $w={63} aria-label="Vista de tareas"><TaskViewIcon /></TaskButton>
          <TaskButton aria-label="Edge"><EdgeIcon /></TaskButton>
          <TaskButton aria-label="Explorador"><ExplorerIcon /></TaskButton>
          <TaskButton aria-label="Correo"><MailIcon /></TaskButton>
          <TaskButton $running aria-label="Teams"><TeamsIcon /></TaskButton>
          <TaskButton $running $current aria-label="Chrome"><ChromeIcon /></TaskButton>
          <TaskButton $running aria-label="WhatsApp"><WhatsAppIcon /></TaskButton>
          <TaskButton $running aria-label="Word"><WordIcon /></TaskButton>
        </TaskGroup>
        <TaskGroup>
          <Weather><WeatherIcon /><span>20°C</span><span>Nublado</span></Weather>
          <TrayButton aria-label="Mostrar iconos ocultos"><ChevronUp /></TrayButton>
          <TrayButton aria-label="Reunirse"><MeetIcon /></TrayButton>
          <TrayButton aria-label="OneDrive"><CloudIcon /></TrayButton>
          <TrayButton aria-label="Actualización"><SyncIcon /></TrayButton>
          <TrayButton aria-label="Batería"><BatteryIcon /></TrayButton>
          <TrayButton aria-label="Volumen"><VolumeIcon /></TrayButton>
          <TrayButton aria-label="Red"><WifiIcon /></TrayButton>
          <Language>ESP</Language>
          <Clock>16:13<br />20/05/2022</Clock>
          <Notifications aria-label="Notificaciones"><NoticeIcon /></Notifications>
        </TaskGroup>
      </Taskbar>
    </Page>
  );
}
